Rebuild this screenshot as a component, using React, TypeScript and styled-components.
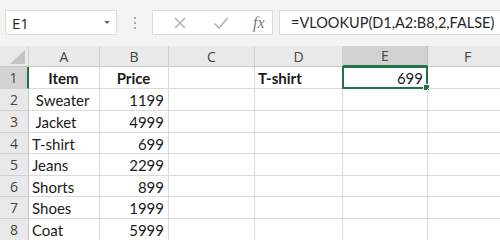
import React from 'react';
import styled, { createGlobalStyle } from 'styled-components';

const GlobalStyle = createGlobalStyle`
  html, body {
    margin: 0;
    padding: 0;
    background: #ffffff;
    overflow: hidden;
  }
`;

const COLS = [
  { name: 'A', width: 71 },
  { name: 'B', width: 69 },
  { name: 'C', width: 86 },
  { name: 'D', width: 88 },
  { name: 'E', width: 85 },
  { name: 'F', width: 80 },
];

type Cell = { text?: string; bold?: boolean; align?: 'left' | 'center' | 'right' };

const ROWS: { h: number; cells: Record<string, Cell> }[] = [
  {
    h: 22,
    cells: {
      A: { text: 'Item', bold: true, align: 'center' },
      B: { text: 'Price', bold: true, align: 'center' },
      D: { text: 'T-shirt', bold: true },
      E: { text: '699', align: 'right' },
    },
  },
  { h: 22, cells: { A: { text: '\u00a0Sweater' }, B: { text: '1199', align: 'right' } } },
  { h: 22, cells: { A: { text: '\u00a0Jacket' }, B: { text: '4999', align: 'right' } } },
  { h: 21, cells: { A: { text: 'T-shirt' }, B: { text: '699', align: 'right' } } },
  { h: 22, cells: { A: { text: 'Jeans' }, B: { text: '2299', align: 'right' } } },
  { h: 21, cells: { A: { text: 'Shorts' }, B: { text: '899', align: 'right' } } },
  { h: 22, cells: { A: { text: 'Shoes' }, B: { text: '1999', align: 'right' } } },
  { h: 22, cells: { A: { text: 'Coat' }, B: { text: '5999', align: 'right' } } },
];

const SELECTED = { col: 'E', row: 1 };

const App: React.FC = () => {
  return (
    <>
      <GlobalStyle />
      <Window>
        <Toolbar>
          <NameBox>
            <span>E1</span>
            <DropArrow />
          </NameBox>
          <Grip>
            <i />
            <i />
            <i />
          </Grip>
          <FormulaButtons>
            <svg width="14" height="14" viewBox="0 0 14 14">
              <path d="M2 2 L12 12 M12 2 L2 12" stroke="#b4b4b4" strokeWidth="1.6" fill="none" />
            </svg>
            <svg width="16" height="14" viewBox="0 0 16 14">
              <path d="M1.5 7.5 L6 12 L14.5 2" stroke="#b4b4b4" strokeWidth="1.6" fill="none" />
            </svg>
            <Fx>fx</Fx>
          </FormulaButtons>
          <FormulaInput>=VLOOKUP(D1,A2:B8,2,FALSE)</FormulaInput>
        </Toolbar>
        <Sheet>
          <HeaderRow>
            <Corner>
              <svg width="15" height="14" viewBox="0 0 15 14">
                <polygon points="15,0 15,14 0,14" fill="#c4c4c4" />
              </svg>
            </Corner>
            {COLS.map((c) => (
              <ColHeader key={c.name} $w={c.width} $active={c.name === SELECTED.col}>
                {c.name}
              </ColHeader>
            ))}
          </HeaderRow>
          {ROWS.map((r, i) => (
            <Row key={i} $h={r.h}>
              <RowHeader $active={i + 1 === SELECTED.row}>{i + 1}</RowHeader>
              {COLS.map((c) => {
                const cell = r.cells[c.name] || {};
                const selected = c.name === SELECTED.col && i + 1 === SELECTED.row;
                return (
                  <CellBox
                    key={c.name}
                    $w={c.width}
                    $bold={cell.bold}
                    $align={cell.align || 'left'}
                  >
                    {cell.text}
                    {selected && (
                      <Selection>
                        <FillHandle />
                      </Selection>
                    )}
                  </CellBox>
                );
              })}
            </Row>
          ))}
        </Sheet>
      </Window>
    </>
  );
};

const Window = styled.div`
  width: 500px;
  height: 240px;
  overflow: hidden;
  background: #ffffff;
  display: flex;
  flex-direction: column;
`;

const Toolbar = styled.div`
  height: 46px;
  flex-shrink: 0;
  background: #f3f3f3;
  display: flex;
  align-items: flex-start;
  padding: 10px 0 0 5px;
  box-sizing: border-box;
`;

const NameBox = styled.div`
  width: 112px;
  height: 25px;
  box-sizing: border-box;
  background: #ffffff;
  border: 1px solid #dcdcdc;
  display: flex;
  align-items: center;
  justify-content: space-between;
  padding: 0 6px 0 6px;
  font-family: 'Open Sans', sans-serif;
  font-size: 15px;
  color: #262626;
`;

const DropArrow = styled.span`
  width: 0;
  height: 0;
  border-left: 3px solid transparent;
  border-right: 3px solid transparent;
  border-top: 3px solid #6a6a6a;
`;

const Grip = styled.div`
  width: 35px;
  height: 25px;
  display: flex;
  flex-direction: column;
  align-items: center;
  justify-content: center;
  gap: 3px;

  i {
    width: 2px;
    height: 2px;
    background: #a8a8a8;
    display: block;
  }
`;

const FormulaButtons = styled.div`
  width: 121px;
  height: 25px;
  box-sizing: border-box;
  background: #ffffff;
  border: 1px solid #dcdcdc;
  display: flex;
  align-items: center;
  padding: 0 0 0 20px;
  gap: 26px;
`;

const Fx = styled.span`
  font-family: 'Liberation Serif', serif;
  font-style: italic;
  font-size: 16px;
  color: #7a7a7a;
  margin-left: -2px;
`;

const FormulaInput = styled.div`
  flex: 1;
  height: 25px;
  margin-left: 6px;
  box-sizing: border-box;
  background: #ffffff;
  border: 1px solid #dcdcdc;
  border-right: none;
  display: flex;
  align-items: center;
  padding-left: 11px;
  font-family: Lato, sans-serif;
  font-size: 14.5px;
  color: #262626;
  white-space: nowrap;
`;

const Sheet = styled.div`
  display: flex;
  flex-direction: column;
  font-family: Lato, sans-serif;
`;

const HeaderRow = styled.div`
  display: flex;
  height: 21px;
  background: #e9e9e9;
`;

const Corner = styled.div`
  width: 29px;
  flex-shrink: 0;
  box-sizing: border-box;
  border-right: 1px solid #d0d0d0;
  border-bottom: 1px solid #c8c8c8;
  display: flex;
  align-items: flex-end;
  justify-content: flex-end;
  padding: 0 3px 2px 0;
`;

const ColHeader = styled.div<{ $w: number; $active?: boolean }>`
  width: ${(p) => p.$w}px;
  flex-shrink: 0;
  box-sizing: border-box;
  display: flex;
  align-items: center;
  justify-content: center;
  background: ${(p) => (p.$active ? '#d2d2d2' : '#e9e9e9')};
  border-right: 1px solid ${(p) => (p.$active ? '#c0c0c0' : '#d0d0d0')};
  border-bottom: ${(p) => (p.$active ? '2px solid #217346' : '1px solid #c8c8c8')};
  font-family: 'Open Sans', sans-serif;
  font-size: 14px;
  color: #444444;
`;

const Row = styled.div<{ $h: number }>`
  display: flex;
  height: ${(p) => p.$h}px;
`;

const RowHeader = styled.div<{ $active?: boolean }>`
  width: 29px;
  flex-shrink: 0;
  box-sizing: border-box;
  display: flex;
  align-items: center;
  justify-content: center;
  background: ${(p) => (p.$active ? '#d2d2d2' : '#e9e9e9')};
  border-right: ${(p) => (p.$active ? '2px solid #217346' : '1px solid #c8c8c8')};
  border-bottom: 1px solid #d0d0d0;
  font-family: 'Open Sans', sans-serif;
  font-size: 14px;
  color: #444444;
`;

const CellBox = styled.div<{ $w: number; $bold?: boolean; $align: string }>`
  position: relative;
  width: ${(p) => p.$w}px;
  flex-shrink: 0;
  box-sizing: border-box;
  border-right: 1px solid #dadada;
  border-bottom: 1px solid #dadada;
  display: flex;
  align-items: center;
  justify-content: ${(p) =>
    p.$align === 'right' ? 'flex-end' : p.$align === 'center' ? 'center' : 'flex-start'};
  padding: 1px 4px 0 3px;
  font-size: 15px;
  font-weight: ${(p) => (p.$bold ? 700 : 400)};
  color: #1a1a1a;
  white-space: pre;
`;

const Selection = styled.div`
  position: absolute;
  left: -1px;
  top: -1px;
  right: -1px;
  bottom: -1px;
  border: 2px solid #217346;
  pointer-events: none;
`;

const FillHandle = styled.div`
  position: absolute;
  right: -4px;
  bottom: -4px;
  width: 5px;
  height: 5px;
  background: #217346;
  border: 1px solid #ffffff;
`;

export default App;
